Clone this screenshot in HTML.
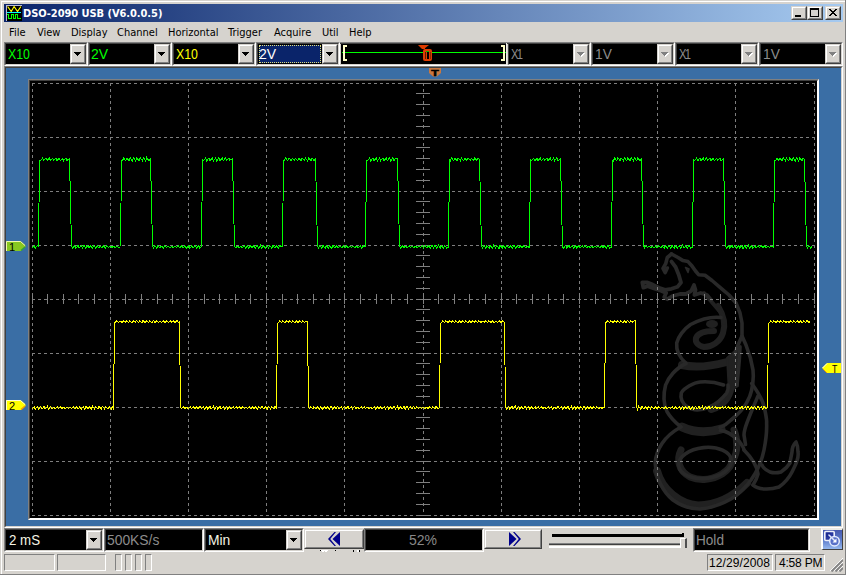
<!DOCTYPE html>
<html><head><meta charset="utf-8"><title>DSO-2090 USB (V6.0.0.5)</title>
<style>
html,body{margin:0;padding:0}
body{width:846px;height:575px;overflow:hidden;background:#d6d3ce;position:relative;font-family:"Liberation Sans",sans-serif}
.abs,.cb,.btn,.ct,.sel,.fld,.pane,.mi{position:absolute;box-sizing:content-box}
.title{left:4px;top:4px;width:839px;height:18px;background:linear-gradient(to right,#0a246a 0%,#a6caf0 100%)}
.ttxt{left:23px;top:7px;font:bold 11px/14px "DejaVu Sans Condensed","DejaVu Sans","Liberation Sans",sans-serif;color:#fff;white-space:nowrap;letter-spacing:-0.06px}
.mi{top:26px;font:11px/14px "DejaVu Sans Condensed","DejaVu Sans","Liberation Sans",sans-serif;color:#000;white-space:nowrap}
.cb{background:#000;border:2px solid;border-color:#808080 #fff #fff #808080;box-shadow:inset 1px 1px 0 #404040, inset -1px -1px 0 #d6d3ce;}
.cb{border:0;box-shadow:none;outline:0}
.cb::before{content:"";position:absolute;left:-2px;top:-2px;right:-2px;bottom:-2px;border:1px solid;border-color:#808080 #fff #fff #808080;z-index:0}
.cb::after{content:"";position:absolute;left:-1px;top:-1px;right:-1px;bottom:-1px;border:1px solid;border-color:#404040 #d6d3ce #d6d3ce #404040}
.ct{font:14px/16px "Liberation Sans",sans-serif;white-space:nowrap;z-index:2;transform-origin:0 0}
.sel{left:1px;top:1px;background:#0a246a;outline:1px dotted #e0e080;outline-offset:-1px}
.btn{background:#d6d3ce;border:2px solid;border-color:#fff #808080 #808080 #fff;box-shadow:none;z-index:2}
.btn::before{content:"";position:absolute;left:-2px;top:-2px;right:-2px;bottom:-2px;border:1px solid;border-color:#d6d3ce #404040 #404040 #d6d3ce}
.fld{background:#000}
.fld::before{content:"";position:absolute;left:-2px;top:-2px;right:-2px;bottom:-2px;border:1px solid;border-color:#808080 #fff #fff #808080}
.fld::after{content:"";position:absolute;left:-1px;top:-1px;right:-1px;bottom:-1px;border:1px solid;border-color:#404040 #d6d3ce #d6d3ce #404040}
.pane{border:1px solid;border-color:#808080 #fff #fff #808080;font:12px/15px "Liberation Sans",sans-serif;color:#000;white-space:nowrap}
.cap{background:#d6d3ce;width:12px;height:10px;border:2px solid;border-color:#fff #808080 #808080 #fff}
.cap::before{content:"";position:absolute;left:-2px;top:-2px;right:-2px;bottom:-2px;border:1px solid;border-color:#d6d3ce #404040 #404040 #d6d3ce}
</style></head><body>
<!-- window frame -->
<div class="abs" style="left:1px;top:1px;width:844px;height:1px;background:#fff"></div>
<div class="abs" style="left:1px;top:1px;width:1px;height:573px;background:#fff"></div>
<div class="abs" style="left:845px;top:0;width:1px;height:575px;background:#808080"></div>
<div class="abs" style="left:0;top:574px;width:846px;height:1px;background:#808080"></div>

<!-- title bar -->
<div class="abs title"></div>
<svg class="abs" style="left:6px;top:5px" width="16" height="16" shape-rendering="crispEdges">
<rect width="16" height="16" fill="#000"/><path d="M0 16V0H16" fill="none" stroke="#b8b8d8" stroke-width="1"/>
<path d="M1.6 1.5 L5.2 6.5 L8.1 1.5 L11.5 6.5 L14.9 1.5" fill="none" stroke="#ffff00" stroke-width="1.15" shape-rendering="auto"/>
<rect x="1" y="7" width="14" height="1" fill="#00ffff"/>
<path d="M1 9.5H2.5V13.5H5.5V9.5H7.5V13.5H9.5V9.5H11.5V13.5H15" fill="none" stroke="#00ff00" stroke-width="1"/>
</svg>
<div class="abs ttxt">DSO-2090 USB (V6.0.0.5)</div>
<!-- caption buttons -->
<div class="abs cap" style="left:791px;top:6px"><svg class="abs" style="left:0;top:0" width="12" height="10" shape-rendering="crispEdges"><rect x="2" y="7" width="6" height="2" fill="#000"/></svg></div>
<div class="abs cap" style="left:807px;top:6px"><svg class="abs" style="left:0;top:0" width="12" height="10" shape-rendering="crispEdges"><path d="M1 0h9v9h-9zM2 2v6h7v-6z" fill="#000" fill-rule="evenodd"/></svg></div>
<div class="abs cap" style="left:825px;top:6px"><svg class="abs" style="left:0;top:0" width="12" height="10" shape-rendering="crispEdges"><path d="M2 1h2v1h1v1h2v-1h1v-1h2v1h-1v1h-1v1h-1v1h1v1h1v1h1v1h-2v-1h-1v-1h-2v1h-1v1h-2v-1h1v-1h1v-1h1v-1h-1v-1h-1v-1h-1z" fill="#000"/></svg></div>

<!-- menu -->
<span class="mi" style="left:9px">File</span>
<span class="mi" style="left:37px">View</span>
<span class="mi" style="left:71px">Display</span>
<span class="mi" style="left:117px">Channel</span>
<span class="mi" style="left:168px">Horizontal</span>
<span class="mi" style="left:228px">Trigger</span>
<span class="mi" style="left:274px">Acquire</span>
<span class="mi" style="left:322px">Util</span>
<span class="mi" style="left:349px">Help</span>

<!-- top combos -->
<div class="cb" style="left:6px;top:44px;width:80px;height:20px"><span class="ct" style="color:#00ff00;left:2px;top:2px;transform:scaleX(0.88)">X10</span><div class="btn" style="left:64px;top:0;width:12px;height:16px"><svg width="9" height="6" style="position:absolute;left:2px;top:6px" shape-rendering="crispEdges"><path d="M0 0h7v1h-7zM1 1h5v1h-5zM2 2h3v1h-3zM3 3h1v1h-1z" fill="#000"/></svg></div></div>
<div class="cb" style="left:90px;top:44px;width:80px;height:20px"><span class="ct" style="color:#00ff00;left:1px;top:2px;transform:scaleX(1.0)">2V</span><div class="btn" style="left:64px;top:0;width:12px;height:16px"><svg width="9" height="6" style="position:absolute;left:2px;top:6px" shape-rendering="crispEdges"><path d="M0 0h7v1h-7zM1 1h5v1h-5zM2 2h3v1h-3zM3 3h1v1h-1z" fill="#000"/></svg></div></div>
<div class="cb" style="left:174px;top:44px;width:80px;height:20px"><span class="ct" style="color:#ffff00;left:2px;top:2px;transform:scaleX(0.88)">X10</span><div class="btn" style="left:64px;top:0;width:12px;height:16px"><svg width="9" height="6" style="position:absolute;left:2px;top:6px" shape-rendering="crispEdges"><path d="M0 0h7v1h-7zM1 1h5v1h-5zM2 2h3v1h-3zM3 3h1v1h-1z" fill="#000"/></svg></div></div>
<div class="cb" style="left:258px;top:44px;width:80px;height:20px"><div class="sel" style="width:62px;height:18px"></div><span class="ct" style="color:#ffffff;left:1px;top:2px;transform:scaleX(1.0)">2V</span><div class="btn" style="left:64px;top:0;width:12px;height:16px"><svg width="9" height="6" style="position:absolute;left:2px;top:6px" shape-rendering="crispEdges"><path d="M0 0h7v1h-7zM1 1h5v1h-5zM2 2h3v1h-3zM3 3h1v1h-1z" fill="#000"/></svg></div></div>
<div class="cb" style="left:509px;top:44px;width:80px;height:20px"><span class="ct" style="color:#8c8c8c;left:2px;top:2px;transform:scaleX(0.8);letter-spacing:-2px">X1</span><div class="btn" style="left:64px;top:0;width:12px;height:16px"><svg width="9" height="6" style="position:absolute;left:2px;top:6px" shape-rendering="crispEdges"><path d="M1 1h7v1h-7zM2 2h5v1h-5zM3 3h3v1h-3zM4 4h1v1h-1z" fill="#fff"/><path d="M0 0h7v1h-7zM1 1h5v1h-5zM2 2h3v1h-3zM3 3h1v1h-1z" fill="#808080"/></svg></div></div>
<div class="cb" style="left:593px;top:44px;width:80px;height:20px"><span class="ct" style="color:#8c8c8c;left:2px;top:2px;transform:scaleX(0.98)">1V</span><div class="btn" style="left:64px;top:0;width:12px;height:16px"><svg width="9" height="6" style="position:absolute;left:2px;top:6px" shape-rendering="crispEdges"><path d="M1 1h7v1h-7zM2 2h5v1h-5zM3 3h3v1h-3zM4 4h1v1h-1z" fill="#fff"/><path d="M0 0h7v1h-7zM1 1h5v1h-5zM2 2h3v1h-3zM3 3h1v1h-1z" fill="#808080"/></svg></div></div>
<div class="cb" style="left:677px;top:44px;width:80px;height:20px"><span class="ct" style="color:#8c8c8c;left:2px;top:2px;transform:scaleX(0.8);letter-spacing:-2px">X1</span><div class="btn" style="left:64px;top:0;width:12px;height:16px"><svg width="9" height="6" style="position:absolute;left:2px;top:6px" shape-rendering="crispEdges"><path d="M1 1h7v1h-7zM2 2h5v1h-5zM3 3h3v1h-3zM4 4h1v1h-1z" fill="#fff"/><path d="M0 0h7v1h-7zM1 1h5v1h-5zM2 2h3v1h-3zM3 3h1v1h-1z" fill="#808080"/></svg></div></div>
<div class="cb" style="left:761px;top:44px;width:80px;height:20px"><span class="ct" style="color:#8c8c8c;left:2px;top:2px;transform:scaleX(0.98)">1V</span><div class="btn" style="left:64px;top:0;width:12px;height:16px"><svg width="9" height="6" style="position:absolute;left:2px;top:6px" shape-rendering="crispEdges"><path d="M1 1h7v1h-7zM2 2h5v1h-5zM3 3h3v1h-3zM4 4h1v1h-1z" fill="#fff"/><path d="M0 0h7v1h-7zM1 1h5v1h-5zM2 2h3v1h-3zM3 3h1v1h-1z" fill="#808080"/></svg></div></div>

<!-- trigger position bar -->
<div class="abs" style="left:340px;top:42px;width:168px;height:24px;background:#d6d3ce"></div>
<div class="abs" style="left:340px;top:42px;width:168px;height:2px;background:#808080"></div>
<div class="abs" style="left:340px;top:43px;width:168px;height:1px;background:#404040"></div>
<div class="abs" style="left:341px;top:44px;width:165px;height:20px;background:#000"></div><div class="abs" style="left:506px;top:43px;width:1px;height:22px;background:#ecebe6"></div>
<div class="abs" style="left:340px;top:65px;width:168px;height:1px;background:#fff"></div>
<svg class="abs" style="left:341px;top:44px" width="166" height="20" shape-rendering="crispEdges">
<rect x="1" y="8" width="164" height="1" fill="#00ff00"/>
<path d="M2 1h4v2h-2v12h2v2h-4z" fill="#ffffc8"/>
<path d="M164 1h-4v2h2v12h-2v2h4z" fill="#ffffc8"/>
<g fill="#e03c00"><path d="M77 1h11l-5 4h-2z" shape-rendering="auto"/><path d="M82 3l3 3" stroke="#e03c00"/><rect x="82" y="5" width="9" height="12" rx="2" shape-rendering="auto"/></g>
<rect x="85" y="7" width="3" height="1" fill="#00c000"/><rect x="86" y="8" width="2" height="7" fill="#000"/><rect x="84" y="8" width="1" height="7" fill="#000" opacity=".55"/><rect x="89" y="8" width="1" height="7" fill="#000" opacity=".35"/>
</svg>

<!-- blue panel -->
<div class="abs" style="left:4px;top:66px;width:839px;height:462px;background:#3a6ea5;box-sizing:border-box;border:1px solid;border-color:#808080 #fff #fff #808080"></div>
<div class="abs" style="left:5px;top:67px;width:837px;height:460px;box-sizing:border-box;border:1px solid;border-color:#404040 #d6d3ce #d6d3ce #404040"></div>

<!-- T marker top -->
<svg class="abs" style="left:429px;top:68px" width="12" height="9"><path d="M0 0h12v5l-4 3.5h-4l-4-3.500z" fill="#c87840"/><text x="6" y="8.400" text-anchor="middle" font-family="Liberation Sans, sans-serif" font-weight="bold" font-size="9.800" fill="#000" stroke="#000" stroke-width=".6" transform="translate(6 0) scale(1.25 1) translate(-6 0)">T</text></svg>

<!-- scope -->
<div class="abs" style="left:28px;top:79px;width:791px;height:441px;box-sizing:border-box;border:1px solid;border-color:#808080 #fff #fff #808080"></div>
<div class="abs" style="left:29px;top:80px;width:789px;height:439px;box-sizing:border-box;border:1px solid;border-color:#404040 #fff #fff #404040"></div>
<svg class="abs" style="left:30px;top:81px;background:#000" width="787" height="437">
<g id="snake" transform="translate(-30,-81)" fill="none" stroke-linecap="round" stroke-linejoin="round">
<g stroke="#212121">
<path d="M718,306 C723,314 726,324 723,333 C720,342 712,347 704,347 C698,346 695,342 696,338 C698,333 705,331 714,331" stroke-width="6"/>
<ellipse cx="712" cy="324" rx="6" ry="4" fill="#212121" stroke="none"/>
<path d="M682,365 C695,368 712,366 727,362" stroke-width="8"/>
<path d="M727,358 L738,348 L738,386 L729,392 Z" fill="#212121" stroke-width="2"/>
<path d="M704,293 L710,300 L716,307 L722,314 L724,323" stroke-width="4"/>
<path d="M731,372 C733,385 731,396 722,404 C718,407 715,408.500 711,409.500" stroke-width="7"/>
<path d="M682,427 C695,433 708,433 721,429" stroke-width="9"/>
<path d="M657,471 C662,490 680,504 698,505.500 C716,505 733,497 747,483" stroke-width="8"/>
<path d="M681,450 C676,460 679,471 690,477 C700,481 712,480 722,474 C728,470 732,465 732,460" stroke-width="7"/>
<path d="M734,430 C738,440 738,452 733,460" stroke-width="7"/>
</g>
<g stroke="#292929" stroke-width="3.600">
<path d="M671.500,254 L678,257.500 L683,260.600 L688,261.600 L692,266 L695.500,271 L698.600,274.700 L705,275.300 L712,280.500 L720.600,287.800 L729,295 L736,303 L740,313 L742,323 L742,336 L738,345 L735,354"/>
<path d="M671.500,254 L667.300,257.500 L665.700,263.700 L663,268.400 L665.200,272.600 L667.300,268"/>
<path d="M671.500,261.600 L675.600,267 L678.800,275 L681,282.500 L677.700,286.700 L671.500,288.800 L665,289.800 L659,287.700 L652.700,284.600 L647.500,282.500 L642.300,282.500 L643.300,287.700 L647.500,286.200 L654.800,288.800 L661,290.800 L666.200,293 L664.200,297 L667.300,299.200 L672.500,296 L680,294 L686,294 L691.300,290.800 L694,285 L695.500,290 L694.400,295 L700.700,293 L707,295 L711,300" stroke-width="3.800"/>
<path d="M685.500,267.500 L689,269 L688,272.500 Z" stroke-width="1.500" fill="#222"/>
<path d="M721,317.500 C713,316.500 702,318.500 690.600,324.500 C684,329 678,337 676.700,343 C676,350 678,356 686,363.400"/>
<path d="M686,363.500 C676,368 668,378 665.600,385 C663,395 664,405 667,411.600 C670,417 676,423 681,427"/>
<path d="M723.600,385 C715,382 705,381.500 700,382 C694,382.500 684,388 681.300,393 C680,399 683,404 687.600,407 C692,410 700,411 709.500,407 C716,404 722,399 726.700,393 C728,390 728.500,387 728,385"/>
<path d="M742,336 L746,345 L750.400,358 L753,370 L753.300,376 C753,390 750,397 747,402 C743,410 736,416 731,420 C727,424 724,426 720,427.500"/>
<path d="M740,346.700 L739.300,360 L738,374.500 L737,385"/>
<path d="M751.700,383.500 C758,392 763,402 764.200,407 C766,415 767,420 766.600,423 C767,432 766,440 764,450 C762,460 758,470 751,480 C745,488 738,495 731,499 C722,504 712,508 700,509 C690,509 680,505 673,500 C663,492 656,478 655.200,463 C656,450 664,436 681,427"/>
<path d="M758,396 C755,403 751,412 747,422.600 C745,428 744,432 744,435 L745.500,444.500"/>
<path d="M720.400,430.400 C726,431 732,434 739,441 C742,445 744,448 744,450"/>
<path d="M744,450 C752,458 757,466 758,474 C757,478 755,482 753,485"/>
<ellipse cx="705" cy="463" rx="26.500" ry="15.500" transform="rotate(-6 705 463)"/>
<path d="M753,485 C758,490 770,490 779,487 C786,482 790,476 792,472 C796,464 799,458 798,452 C798,447 797,444 796,442 C793,445 792,448 792,452 C791,458 790,461 790,463 C787,468 784,470 781,472 C777,473 773,473 770,472 C766,470 763,468 762,465"/>
</g>
</g>
<g stroke="#7e7e7e" stroke-width="1" stroke-dasharray="3 3" shape-rendering="crispEdges"><line x1="2.5" y1="2" x2="2.5" y2="435"/><line x1="80.5" y1="2" x2="80.5" y2="435"/><line x1="158.5" y1="2" x2="158.5" y2="435"/><line x1="236.5" y1="2" x2="236.5" y2="435"/><line x1="314.5" y1="2" x2="314.5" y2="435"/><line x1="393.5" y1="2" x2="393.5" y2="435"/><line x1="471.5" y1="2" x2="471.5" y2="435"/><line x1="549.5" y1="2" x2="549.5" y2="435"/><line x1="627.5" y1="2" x2="627.5" y2="435"/><line x1="705.5" y1="2" x2="705.5" y2="435"/><line x1="784.5" y1="2" x2="784.5" y2="435"/><line x1="2" y1="2.5" x2="785" y2="2.5"/><line x1="2" y1="56.5" x2="785" y2="56.5"/><line x1="2" y1="110.5" x2="785" y2="110.5"/><line x1="2" y1="164.5" x2="785" y2="164.5"/><line x1="2" y1="218.5" x2="785" y2="218.5"/><line x1="2" y1="272.5" x2="785" y2="272.5"/><line x1="2" y1="326.5" x2="785" y2="326.5"/><line x1="2" y1="380.5" x2="785" y2="380.5"/><line x1="2" y1="434.5" x2="785" y2="434.5"/></g>
<g stroke="#808080" stroke-width="1" shape-rendering="crispEdges"><line x1="2.5" y1="213" x2="2.5" y2="223"/><line x1="17.5" y1="213" x2="17.5" y2="223"/><line x1="33.5" y1="213" x2="33.5" y2="223"/><line x1="48.5" y1="213" x2="48.5" y2="223"/><line x1="64.5" y1="213" x2="64.5" y2="223"/><line x1="80.5" y1="213" x2="80.5" y2="223"/><line x1="95.5" y1="213" x2="95.5" y2="223"/><line x1="111.5" y1="213" x2="111.5" y2="223"/><line x1="127.5" y1="213" x2="127.5" y2="223"/><line x1="142.5" y1="213" x2="142.5" y2="223"/><line x1="158.5" y1="213" x2="158.5" y2="223"/><line x1="174.5" y1="213" x2="174.5" y2="223"/><line x1="189.5" y1="213" x2="189.5" y2="223"/><line x1="205.5" y1="213" x2="205.5" y2="223"/><line x1="220.5" y1="213" x2="220.5" y2="223"/><line x1="236.5" y1="213" x2="236.5" y2="223"/><line x1="252.5" y1="213" x2="252.5" y2="223"/><line x1="267.5" y1="213" x2="267.5" y2="223"/><line x1="283.5" y1="213" x2="283.5" y2="223"/><line x1="299.5" y1="213" x2="299.5" y2="223"/><line x1="314.5" y1="213" x2="314.5" y2="223"/><line x1="330.5" y1="213" x2="330.5" y2="223"/><line x1="346.5" y1="213" x2="346.5" y2="223"/><line x1="361.5" y1="213" x2="361.5" y2="223"/><line x1="377.5" y1="213" x2="377.5" y2="223"/><line x1="393.5" y1="213" x2="393.5" y2="223"/><line x1="408.5" y1="213" x2="408.5" y2="223"/><line x1="424.5" y1="213" x2="424.5" y2="223"/><line x1="439.5" y1="213" x2="439.5" y2="223"/><line x1="455.5" y1="213" x2="455.5" y2="223"/><line x1="471.5" y1="213" x2="471.5" y2="223"/><line x1="486.5" y1="213" x2="486.5" y2="223"/><line x1="502.5" y1="213" x2="502.5" y2="223"/><line x1="518.5" y1="213" x2="518.5" y2="223"/><line x1="533.5" y1="213" x2="533.5" y2="223"/><line x1="549.5" y1="213" x2="549.5" y2="223"/><line x1="565.5" y1="213" x2="565.5" y2="223"/><line x1="580.5" y1="213" x2="580.5" y2="223"/><line x1="596.5" y1="213" x2="596.5" y2="223"/><line x1="611.5" y1="213" x2="611.5" y2="223"/><line x1="627.5" y1="213" x2="627.5" y2="223"/><line x1="643.5" y1="213" x2="643.5" y2="223"/><line x1="658.5" y1="213" x2="658.5" y2="223"/><line x1="674.5" y1="213" x2="674.5" y2="223"/><line x1="690.5" y1="213" x2="690.5" y2="223"/><line x1="705.5" y1="213" x2="705.5" y2="223"/><line x1="721.5" y1="213" x2="721.5" y2="223"/><line x1="737.5" y1="213" x2="737.5" y2="223"/><line x1="752.5" y1="213" x2="752.5" y2="223"/><line x1="768.5" y1="213" x2="768.5" y2="223"/><line x1="784.5" y1="213" x2="784.5" y2="223"/><line x1="386" y1="2.5" x2="400" y2="2.5"/><line x1="386" y1="12.5" x2="400" y2="12.5"/><line x1="386" y1="23.5" x2="400" y2="23.5"/><line x1="386" y1="34.5" x2="400" y2="34.5"/><line x1="386" y1="45.5" x2="400" y2="45.5"/><line x1="386" y1="56.5" x2="400" y2="56.5"/><line x1="386" y1="66.5" x2="400" y2="66.5"/><line x1="386" y1="77.5" x2="400" y2="77.5"/><line x1="386" y1="88.5" x2="400" y2="88.5"/><line x1="386" y1="99.5" x2="400" y2="99.5"/><line x1="386" y1="110.5" x2="400" y2="110.5"/><line x1="386" y1="120.5" x2="400" y2="120.5"/><line x1="386" y1="131.5" x2="400" y2="131.5"/><line x1="386" y1="142.5" x2="400" y2="142.5"/><line x1="386" y1="153.5" x2="400" y2="153.5"/><line x1="386" y1="164.5" x2="400" y2="164.5"/><line x1="386" y1="174.5" x2="400" y2="174.5"/><line x1="386" y1="185.5" x2="400" y2="185.5"/><line x1="386" y1="196.5" x2="400" y2="196.5"/><line x1="386" y1="207.5" x2="400" y2="207.5"/><line x1="386" y1="218.5" x2="400" y2="218.5"/><line x1="386" y1="228.5" x2="400" y2="228.5"/><line x1="386" y1="239.5" x2="400" y2="239.5"/><line x1="386" y1="250.5" x2="400" y2="250.5"/><line x1="386" y1="261.5" x2="400" y2="261.5"/><line x1="386" y1="272.5" x2="400" y2="272.5"/><line x1="386" y1="282.5" x2="400" y2="282.5"/><line x1="386" y1="293.5" x2="400" y2="293.5"/><line x1="386" y1="304.5" x2="400" y2="304.5"/><line x1="386" y1="315.5" x2="400" y2="315.5"/><line x1="386" y1="326.5" x2="400" y2="326.5"/><line x1="386" y1="336.5" x2="400" y2="336.5"/><line x1="386" y1="347.5" x2="400" y2="347.5"/><line x1="386" y1="358.5" x2="400" y2="358.5"/><line x1="386" y1="369.5" x2="400" y2="369.5"/><line x1="386" y1="380.5" x2="400" y2="380.5"/><line x1="386" y1="390.5" x2="400" y2="390.5"/><line x1="386" y1="401.5" x2="400" y2="401.5"/><line x1="386" y1="412.5" x2="400" y2="412.5"/><line x1="386" y1="423.5" x2="400" y2="423.5"/><line x1="386" y1="434.5" x2="400" y2="434.5"/></g>
<polyline points="2.0,167.3 4.2,164.7 5.3,167.1 7.5,164.6 8.5,165.5 9.5,79.2 10.5,79.5 12.7,77.0 13.8,79.5 16.0,77.3 17.1,79.5 19.3,77.1 20.4,79.3 22.6,77.4 23.7,79.4 25.9,77.2 27.0,79.5 29.2,77.3 30.3,79.7 32.5,77.3 33.6,79.8 35.8,77.1 36.9,79.6 39.5,77.6 41.5,164.9 42.5,167.3 44.7,164.6 45.8,167.3 48.0,164.4 49.1,167.2 51.3,164.4 52.4,167.1 54.0,164.6 55.7,167.2 57.3,164.3 59.0,167.2 60.6,164.5 62.3,167.2 63.9,164.5 65.6,167.0 67.2,164.5 68.9,167.1 70.0,164.8 72.2,166.9 73.3,164.8 75.5,166.9 76.6,164.9 78.8,166.6 79.9,165.0 82.1,166.4 83.2,165.3 85.4,166.6 86.5,165.2 88.7,166.7 90.5,165.5 91.5,79.4 92.5,79.7 93.6,77.0 95.8,79.8 96.9,77.1 99.1,79.8 100.2,76.9 102.4,79.9 103.5,76.9 105.7,80.0 106.8,76.6 109.0,79.9 110.1,76.7 112.3,79.7 113.4,76.7 115.6,79.9 116.7,76.5 118.9,80.0 120.5,77.8 122.5,165.0 123.5,167.2 124.6,164.7 126.8,167.1 127.9,164.8 130.1,166.8 131.2,164.9 133.4,166.9 134.5,165.0 136.7,166.6 137.8,165.1 140.0,166.6 141.7,165.3 143.3,166.5 145.0,165.2 146.6,166.7 148.3,165.0 149.9,166.9 151.6,165.0 153.2,166.9 154.9,164.8 156.5,167.2 158.7,164.5 159.8,167.0 162.0,164.7 163.1,167.1 165.3,164.6 166.4,167.3 168.6,164.4 169.7,167.2 171.5,165.4 172.5,79.0 173.5,79.8 175.7,76.8 176.8,80.1 179.0,76.7 180.1,79.8 182.3,76.8 183.4,79.9 185.6,77.1 186.7,79.9 188.9,76.8 190.0,79.8 192.2,76.9 193.3,79.6 195.5,77.1 196.6,79.4 198.8,77.1 199.9,79.3 202.5,77.5 204.5,164.7 205.5,166.6 207.7,165.2 208.8,166.7 211.0,165.1 212.1,166.8 214.3,165.0 215.4,167.0 217.6,164.9 218.7,167.2 220.9,164.5 222.0,167.1 223.7,164.6 225.3,167.2 227.0,164.5 228.6,167.1 230.3,164.2 231.9,167.5 233.6,164.4 235.2,167.3 236.9,164.6 238.5,167.1 239.6,164.5 241.8,167.1 242.9,164.4 245.1,167.0 246.2,164.8 248.4,167.1 249.5,164.7 252.5,165.6 253.5,79.2 254.5,79.4 255.6,77.1 257.8,79.6 258.9,77.1 261.1,79.4 262.2,77.4 264.4,79.4 265.5,77.4 267.7,79.6 268.8,77.2 271.0,79.7 272.1,77.2 274.3,79.6 275.4,76.9 277.6,79.9 278.7,76.8 280.9,79.9 282.0,76.7 284.2,80.0 285.5,77.7 287.5,165.2 288.5,167.2 289.6,164.6 291.8,167.1 292.9,164.5 295.1,167.2 296.2,164.3 298.4,167.4 299.5,164.5 301.7,167.3 302.8,164.3 305.0,167.2 306.1,164.7 308.3,166.9 310.0,164.8 311.6,166.8 313.3,164.9 314.9,166.8 316.6,164.9 318.2,166.7 319.9,165.2 321.5,166.5 323.2,165.2 324.8,166.5 327.0,165.1 328.1,166.9 330.3,164.9 331.4,167.0 333.6,164.8 335.5,165.7 336.5,79.6 337.5,79.7 339.7,76.8 340.8,80.0 343.0,76.9 344.1,79.8 346.3,76.6 347.4,80.0 349.6,77.0 350.7,79.7 352.9,77.0 354.0,80.1 356.2,76.6 357.3,79.7 359.5,76.7 360.6,80.0 362.8,76.8 363.9,79.7 366.1,76.9 367.5,77.6 369.5,164.4 370.5,167.0 372.7,164.8 373.8,166.8 376.0,164.8 377.1,166.6 379.3,165.0 380.4,166.5 382.6,165.3 383.7,166.5 385.9,165.2 387.0,166.7 389.2,165.0 390.3,166.8 392.5,164.9 393.6,166.9 395.3,164.6 396.9,167.0 398.6,164.6 400.2,167.2 401.9,164.3 403.5,167.2 405.2,164.3 406.8,167.3 408.5,164.4 410.1,167.3 411.2,164.6 413.4,167.3 414.5,164.5 416.7,167.1 418.5,166.6 419.5,78.7 420.5,79.8 421.6,76.7 423.8,79.8 424.9,77.0 427.1,79.7 428.2,77.0 430.4,79.7 431.5,77.2 433.7,79.6 434.8,77.2 437.0,79.4 438.1,77.1 440.3,79.4 441.4,77.3 443.6,79.5 444.7,77.1 446.9,79.5 448.0,77.1 449.5,78.2 451.5,165.2 452.5,167.0 453.6,164.8 455.8,167.1 456.9,164.6 459.1,167.3 460.2,164.5 462.4,167.4 463.5,164.3 465.7,167.2 466.8,164.4 469.0,167.5 470.1,164.2 472.3,167.2 473.4,164.6 475.6,167.2 476.7,164.6 478.9,167.1 480.6,164.7 482.2,167.2 483.9,164.4 485.5,167.2 487.2,164.8 488.8,167.0 490.5,164.7 492.1,166.7 493.8,164.8 495.4,166.8 497.6,165.1 499.5,166.8 500.5,79.0 501.5,79.4 503.7,77.1 504.8,79.6 507.0,77.3 508.1,79.6 510.3,77.1 511.4,79.6 513.6,77.2 514.7,79.7 516.9,76.9 518.0,79.6 520.2,76.9 521.3,79.8 523.5,77.1 524.6,79.8 526.8,76.7 527.9,79.9 530.5,77.5 532.5,165.9 533.5,167.4 535.7,164.2 536.8,167.1 539.0,164.5 540.1,167.0 542.3,164.4 543.4,167.0 545.6,164.7 546.7,167.0 548.9,164.5 550.0,167.0 552.2,164.9 553.3,166.7 555.5,164.9 556.6,166.6 558.8,165.1 559.9,166.4 562.1,165.4 563.2,166.6 564.8,165.2 566.5,166.6 568.1,164.9 569.8,166.9 571.4,164.7 573.1,166.9 574.7,164.6 576.4,167.0 578.0,164.4 579.7,167.2 581.5,165.9 582.5,79.2 583.5,80.0 584.6,76.9 586.8,79.7 587.9,76.8 590.1,79.8 591.2,77.0 593.4,79.7 594.5,77.0 596.7,79.7 597.8,76.9 600.0,79.7 601.1,76.7 603.3,79.7 604.4,76.9 606.6,79.6 607.7,77.1 609.9,79.5 611.5,77.8 613.5,164.4 614.5,166.7 615.6,165.0 617.8,166.5 618.9,165.2 621.1,166.6 622.2,165.3 624.4,166.7 625.5,165.1 627.7,166.8 628.8,164.8 631.0,166.9 632.1,164.8 634.3,167.1 635.4,164.5 637.6,167.1 638.7,164.4 640.9,167.3 642.0,164.4 644.2,167.2 645.3,164.5 647.5,167.1 649.1,164.6 650.8,167.1 652.4,164.3 654.1,167.2 655.7,164.6 657.4,167.1 659.0,164.3 660.7,167.3 662.5,166.4 663.5,78.8 664.5,79.6 666.7,77.0 667.8,79.6 670.0,77.2 671.1,79.6 673.3,77.2 674.4,79.6 676.6,77.0 677.7,79.4 679.9,77.4 681.0,79.5 683.2,77.4 684.3,79.5 686.5,77.4 687.6,79.5 689.8,77.1 690.9,79.7 693.5,77.7 695.5,165.2 696.5,166.9 698.7,164.7 699.8,167.0 702.0,164.5 703.1,167.1 705.3,164.6 706.4,167.2 708.6,164.5 709.7,167.3 711.9,164.4 713.0,167.4 715.2,164.3 716.3,167.3 718.5,164.3 719.6,167.1 721.8,164.6 722.9,167.3 725.1,164.7 726.2,167.1 728.4,164.7 729.5,166.7 731.7,164.7 732.8,166.8 734.4,165.0 736.1,166.6 737.7,165.1 739.4,166.4 741.0,165.3 743.5,166.2 744.5,79.7 745.5,79.6 747.1,77.0 748.8,79.7 749.9,76.9 752.1,79.8 753.2,76.9 755.4,79.7 756.5,77.1 758.7,79.7 759.8,76.9 762.0,79.7 763.1,76.7 765.3,79.9 766.4,76.7 768.6,79.9 769.7,76.7 771.9,79.9 773.0,77.0 774.5,78.6 776.5,165.5 777.5,167.2 778.6,164.5 780.8,167.2 781.9,164.7" fill="none" stroke="#00ff00" stroke-width="1" shape-rendering="crispEdges"/>
<polyline points="2.0,327.9 4.2,325.5 5.3,328.2 7.5,325.5 8.6,328.2 10.8,325.2 11.9,328.1 14.1,325.5 15.2,328.0 17.4,325.4 18.5,328.1 20.7,325.5 21.8,327.9 24.0,325.8 25.1,327.7 27.3,325.8 28.4,327.8 30.6,325.9 31.7,327.6 33.9,326.1 35.0,327.4 37.2,326.1 38.3,327.6 39.9,325.9 41.6,327.7 43.2,325.9 44.9,327.8 46.5,325.8 48.2,327.9 49.8,325.8 51.5,328.1 53.1,325.7 54.8,328.2 55.9,325.3 58.1,327.9 59.2,325.4 61.4,328.2 62.5,325.2 64.7,328.1 65.8,325.5 68.0,328.0 69.1,325.2 71.3,328.0 72.4,325.4 74.6,327.9 75.7,325.4 77.9,328.1 79.0,325.7 81.2,328.0 82.3,325.6 83.5,327.6 84.5,241.8 85.5,241.5 86.6,239.6 88.8,241.5 89.9,239.9 92.1,241.4 93.2,239.8 95.4,241.5 96.5,239.9 98.7,241.4 99.8,239.9 102.0,241.5 103.1,239.7 105.3,241.4 106.4,239.7 108.6,241.7 109.7,239.8 111.9,241.7 113.0,239.6 115.2,241.7 116.3,239.7 118.5,241.6 119.6,239.7 121.8,241.8 123.4,239.6 125.1,241.6 126.7,239.7 128.4,241.6 130.0,239.8 131.7,241.5 133.3,239.6 135.0,241.6 136.7,239.5 138.3,241.6 140.5,239.8 141.6,241.6 143.8,239.8 144.9,241.5 147.1,239.6 148.2,241.6 149.5,240.9 150.5,326.2 151.5,327.7 153.7,325.8 154.8,327.5 157.0,326.0 158.1,327.5 160.3,325.9 161.4,327.7 163.6,325.8 164.7,327.8 166.9,325.8 168.0,327.7 170.2,325.5 171.3,327.8 173.5,325.6 174.6,328.0 176.8,325.6 177.9,328.2 180.1,325.2 181.2,328.0 183.4,325.3 184.5,328.0 186.7,325.3 187.8,328.1 190.0,325.5 191.1,328.0 193.3,325.5 194.4,328.2 196.6,325.5 197.7,327.9 199.9,325.4 201.0,328.0 203.2,325.6 204.3,327.7 206.5,325.8 207.6,327.6 209.3,325.9 210.9,327.5 212.6,326.0 214.2,327.4 215.9,326.1 217.5,327.6 219.2,325.9 220.8,327.6 222.5,325.9 224.1,327.8 225.2,325.8 227.4,327.8 228.5,325.8 230.7,327.9 231.8,325.4 234.0,327.9 235.1,325.5 237.3,328.1 238.4,325.3 240.6,328.0 241.7,325.5 243.9,328.0 245.0,325.4 246.5,327.0 247.5,242.1 248.5,241.8 249.6,239.5 251.8,241.5 252.9,239.8 255.1,241.7 256.2,239.6 258.4,241.6 259.5,239.7 261.7,241.5 262.8,239.8 265.0,241.7 266.1,239.7 268.3,241.6 269.4,239.7 271.6,241.4 272.7,239.9 274.9,241.4 276.0,239.8 277.5,240.7 278.5,326.7 279.5,327.7 280.6,325.8 282.8,327.8 283.9,325.8 286.1,327.9 287.2,325.8 289.4,328.0 290.5,325.7 292.7,328.1 294.4,325.4 296.0,328.0 297.7,325.6 299.3,328.0 301.0,325.3 302.6,328.2 304.3,325.6 305.9,327.9 307.6,325.4 309.2,328.1 311.4,325.5 312.5,327.9 314.7,325.4 315.8,327.8 318.0,325.6 319.1,327.9 321.3,325.4 322.4,327.9 324.6,325.5 325.7,327.7 327.9,325.9 329.0,327.6 331.2,325.8 332.3,327.6 334.5,326.1 335.6,327.4 337.8,326.0 338.9,327.7 341.1,325.9 342.2,327.7 344.4,325.7 345.5,328.0 347.7,325.8 348.8,327.8 351.0,325.6 352.1,328.0 354.3,325.4 355.4,327.9 357.6,325.3 358.7,328.2 360.9,325.4 362.0,328.0 364.2,325.2 365.3,328.0 367.5,325.2 368.6,328.0 370.8,325.5 371.9,328.1 374.1,325.5 375.2,328.1 376.9,325.5 378.5,327.8 380.2,325.7 381.8,327.8 383.5,325.6 385.1,327.9 386.8,325.9 388.4,327.6 390.1,326.0 391.7,327.6 392.8,326.1 395.0,327.4 396.1,326.1 398.3,327.6 399.4,325.8 401.6,327.8 402.7,325.7 404.9,328.0 406.0,325.5 408.2,327.9 409.5,326.6 410.5,242.1 411.5,241.7 412.6,239.8 414.8,241.7 415.9,239.7 418.1,241.6 419.2,239.7 421.4,241.6 422.5,239.8 424.7,241.6 425.8,239.7 428.0,241.8 429.1,239.8 431.3,241.8 432.4,239.8 434.6,241.6 435.7,239.6 437.9,241.7 439.0,239.7 441.2,241.5 442.3,239.7 444.5,241.5 445.6,239.6 447.8,241.5 448.9,239.8 451.1,241.6 452.2,240.0 454.4,241.5 455.5,239.8 457.7,241.6 458.8,239.9 461.0,241.4 462.7,239.9 464.3,241.7 466.0,239.8 467.6,241.7 469.3,239.6 470.9,241.6 472.6,239.8 474.5,241.1 475.5,326.2 476.5,328.0 478.7,325.3 479.8,328.0 482.0,325.5 483.1,327.9 485.3,325.3 486.4,328.3 488.6,325.3 489.7,328.2 491.9,325.6 493.0,327.9 495.2,325.5 496.3,328.1 498.5,325.4 499.6,327.8 501.8,325.7 502.9,327.8 505.1,325.7 506.2,327.8 508.4,325.9 509.5,327.6 511.7,325.9 512.8,327.5 515.0,326.0 516.1,327.6 518.3,326.0 519.4,327.6 521.6,325.9 522.7,327.9 524.9,325.9 526.0,327.8 528.2,325.5 529.3,327.9 531.5,325.7 532.6,327.9 534.8,325.5 535.9,328.0 538.1,325.2 539.2,328.2 541.4,325.2 542.5,328.0 544.7,325.6 545.8,328.0 547.4,325.4 549.1,328.2 550.7,325.4 552.4,327.9 554.0,325.5 555.7,328.0 557.3,325.5 559.0,328.0 560.6,325.5 562.3,327.8 563.4,325.8 565.6,327.8 566.7,325.9 568.9,327.6 570.0,326.0 572.2,327.5 573.3,326.1 574.5,326.7 575.5,241.1 576.5,241.4 577.6,239.7 579.8,241.6 580.9,239.8 583.1,241.5 584.2,239.6 586.4,241.6 587.5,239.8 589.7,241.7 590.8,239.7 593.0,241.8 594.1,239.8 596.3,241.6 597.4,239.6 599.6,241.8 600.7,239.5 602.9,241.5 604.0,239.7 605.5,239.9 606.5,325.6 607.5,328.3 608.6,325.4 610.8,328.2 611.9,325.5 614.1,328.1 615.2,325.5 617.4,327.8 618.5,325.5 620.7,328.0 621.8,325.8 624.0,327.8 625.1,325.7 627.3,327.6 628.4,325.9 630.6,327.4 632.2,326.1 633.9,327.5 635.5,326.0 637.2,327.7 638.8,326.0 640.5,327.6 642.1,325.8 643.8,327.9 645.4,325.8 647.1,327.9 649.3,325.7 650.4,328.1 652.6,325.5 653.7,327.9 655.9,325.6 657.0,328.1 659.2,325.4 660.3,328.2 662.5,325.6 663.6,328.0 665.8,325.3 666.9,328.1 669.1,325.5 670.2,328.0 672.4,325.2 673.5,327.9 675.7,325.5 676.8,327.9 679.0,325.6 680.1,327.9 682.3,325.5 683.4,327.7 685.6,325.9 686.7,327.7 688.9,326.0 690.0,327.4 692.2,325.9 693.3,327.5 695.5,326.0 696.6,327.6 698.8,325.8 699.9,327.7 702.1,325.9 703.2,327.7 705.4,325.7 706.5,328.0 708.7,325.4 709.8,327.8 712.0,325.5 713.1,328.0 715.3,325.4 716.4,328.0 718.0,325.5 719.7,328.1 721.3,325.2 723.0,328.0 724.6,325.4 726.3,328.2 727.9,325.2 729.6,327.9 731.2,325.6 732.9,328.2 734.0,325.3 736.2,327.9 737.5,326.4 738.5,242.1 739.5,241.6 740.6,239.6 742.8,241.6 743.9,239.7 746.1,241.4 747.2,239.7 749.4,241.4 750.5,239.9 752.7,241.6 753.8,239.8 756.0,241.4 757.1,239.9 759.3,241.5 760.4,239.8 762.6,241.5 763.7,239.9 765.9,241.5 767.0,239.7 769.2,241.7 770.3,239.8 772.5,241.7 773.6,239.6 775.8,241.5 776.9,239.6 779.1,241.6 780.2,239.6" fill="none" stroke="#ffff00" stroke-width="1" shape-rendering="crispEdges"/>
</svg>

<!-- channel markers -->
<svg class="abs" style="left:6px;top:241px" width="20" height="10"><path d="M0 0h14.500l5 4.500v1.500l-4.500 4h-15z" fill="#88c820"/><path d="M.5 10V.5H14.500L19 4.500" stroke="#f4f8b0" fill="none"/><path d="M15 9.500l4-3.500" stroke="#30a040" stroke-width="1.500"/></svg>
<span class="abs" style="left:9px;top:241px;font:11px/12px 'Liberation Sans',sans-serif;color:#000">1</span>
<svg class="abs" style="left:6px;top:400px" width="20" height="10"><path d="M0 0h14.500l5 4.500v1.500l-4.500 4h-15z" fill="#ffff00"/><path d="M.5 10V.5H14.500L19 4.500" stroke="#ffffd0" fill="none"/><path d="M15 9.500l4-3.500" stroke="#f0a000" stroke-width="1.500"/></svg>
<span class="abs" style="left:9px;top:400px;font:11px/12px 'Liberation Sans',sans-serif;color:#000">2</span>
<svg class="abs" style="left:822px;top:363px" width="19" height="10"><path d="M19 0h-14l-5 5l5 5h14z" fill="#ffff00"/><path d="M5 .5l-4.500 4.500" stroke="#fff"/><path d="M1 6l4 4" stroke="#f0a000"/></svg>
<span class="abs" style="left:832px;top:363px;font:11px/12px 'Liberation Sans',sans-serif;color:#000;transform:scaleX(.8);transform-origin:0 0">T</span>

<!-- bottom bar -->
<div class="cb" style="left:6px;top:530px;width:96px;height:20px"><span class="ct" style="color:#f4f4e4;left:3px;top:2px;transform:scaleX(0.95)">2 mS</span><div class="btn" style="left:80px;top:0;width:12px;height:16px"><svg width="9" height="6" style="position:absolute;left:2px;top:6px" shape-rendering="crispEdges"><path d="M0 0h7v1h-7zM1 1h5v1h-5zM2 2h3v1h-3zM3 3h1v1h-1z" fill="#000"/></svg></div></div>
<div class="fld" style="left:106px;top:530px;width:96px;height:20px"><span class="ct" style="color:#8c8c8c;left:1px;top:2px;transform:scaleX(0.99)">500KS/s</span></div>
<div class="cb" style="left:206px;top:530px;width:96px;height:20px"><span class="ct" style="color:#f4f4e4;left:2px;top:2px;transform:scaleX(0.99)">Min</span><div class="btn" style="left:80px;top:0;width:12px;height:16px"><svg width="9" height="6" style="position:absolute;left:2px;top:6px" shape-rendering="crispEdges"><path d="M0 0h7v1h-7zM1 1h5v1h-5zM2 2h3v1h-3zM3 3h1v1h-1z" fill="#000"/></svg></div></div>
<div class="btn" style="left:304px;top:529px;width:56px;height:16px"><svg class="abs" style="left:22px;top:1px" width="14" height="14"><path d="M6.500 0L0 7L6.500 14h1.500L2.200 7L8 0z" fill="#00008b"/><path d="M12 0v14l-7.500-7z" fill="#00008b"/></svg></div>
<div class="fld" style="left:366px;top:530px;width:116px;height:20px"><span class="ct" style="color:#888888;left:43px;top:2px;transform:scaleX(1.0)">52%</span></div>
<div class="btn" style="left:484px;top:529px;width:54px;height:16px"><svg class="abs" style="left:21px;top:1px" width="14" height="14"><path d="M7.500 0L14 7L7.500 14h-1.500L11.800 7L6 0z" fill="#00008b"/><path d="M2 0v14l7.500-7z" fill="#00008b"/></svg></div>
<svg class="abs" style="left:318px;top:550px" width="46" height="2" shape-rendering="crispEdges"><path d="M3 0h7v1h-1v1h-2v-1h-1v1h-2v-1h-1z" fill="#fff"/><rect x="2" y="0" width="1" height="1" fill="#000"/><rect x="17" y="0" width="1" height="1" fill="#000"/><rect x="35" y="0" width="1" height="2" fill="#000"/><rect x="39" y="0" width="2" height="2" fill="#fff"/><rect x="41" y="0" width="1" height="2" fill="#000"/></svg>
<!-- slider -->
<div class="abs" style="left:552px;top:534px;width:132px;height:3px;background:#000"></div><div class="abs" style="left:682px;top:533px;width:2px;height:1px;background:#000"></div>
<div class="abs" style="left:549px;top:543px;width:131px;height:1px;background:#808080"></div>
<div class="abs" style="left:549px;top:544px;width:131px;height:1px;background:#404040"></div>
<div class="abs" style="left:549px;top:545px;width:134px;height:1px;background:#d6d3ce"></div>
<div class="abs" style="left:549px;top:546px;width:131px;height:1.5px;background:#fff"></div>
<div class="abs" style="left:680px;top:538px;width:4px;height:9px;background:#d6d3ce;border:solid;border-width:1px 2px 0 1px;border-color:#fff #505050 #404040 #fff"></div>
<div class="fld" style="left:695px;top:530px;width:113px;height:20px"><span class="ct" style="color:#8c8c8c;left:1px;top:2px;transform:scaleX(0.97)">Hold</span></div>
<!-- icon button -->
<div class="abs" style="left:821px;top:528px;width:22px;height:22px;background:linear-gradient(to bottom,#4658ae,#5a78c8 50%,#96b8ee);box-sizing:border-box;border:solid;border-width:2px 1px 1px 2px;border-color:#ecebe6 #404040 #404040 #fff"></div>
<svg class="abs" style="left:822px;top:529px" width="20" height="20"><rect x="2.800" y="2.500" width="9.400" height="9" rx="1" fill="#2838a0" stroke="#eef0fa" stroke-width="1.600"/><circle cx="12.500" cy="12.200" r="4.800" fill="#5870c8" stroke="#e4ecff" stroke-width="1.500"/><path d="M6.500 5.500L13 12" stroke="#dfe6fa" stroke-width="1.500" fill="none"/><path d="M5 8V4.500H8.500" stroke="#1a2890" stroke-width="1.400" fill="none"/><path d="M14.500 9.500V13.500H10.500z" fill="#fff"/></svg>

<!-- status bar -->
<div class="pane" style="left:4px;top:554px;width:49px;height:15px"></div>
<div class="pane" style="left:57px;top:554px;width:47px;height:15px"></div>
<div class="pane" style="left:115px;top:554px;width:5px;height:15px"></div>
<div class="pane" style="left:125px;top:554px;width:5px;height:15px"></div>
<div class="pane" style="left:135px;top:554px;width:5px;height:15px"></div>
<div class="pane" style="left:145px;top:554px;width:5px;height:15px"></div>
<div class="pane" style="left:707px;top:554px;width:64px;height:15px"><span class="abs" style="left:1px;top:1px;letter-spacing:0.1px">12/29/2008</span></div>
<div class="pane" style="left:775px;top:554px;width:48px;height:15px"><span class="abs" style="left:3px;top:1px;letter-spacing:-0.2px">4:58 PM</span></div>
<svg class="abs" style="left:830px;top:558px" width="13" height="14"><g stroke="#fff" stroke-width="1"><path d="M0 13L13 0M4 13L13 4M8 13L13 8"/></g><g stroke="#848484" stroke-width="1.900"><path d="M1.500 13.500L13 2M5.500 13.500L13 6M9.500 13.500L13 10"/></g></svg>
</body></html>
